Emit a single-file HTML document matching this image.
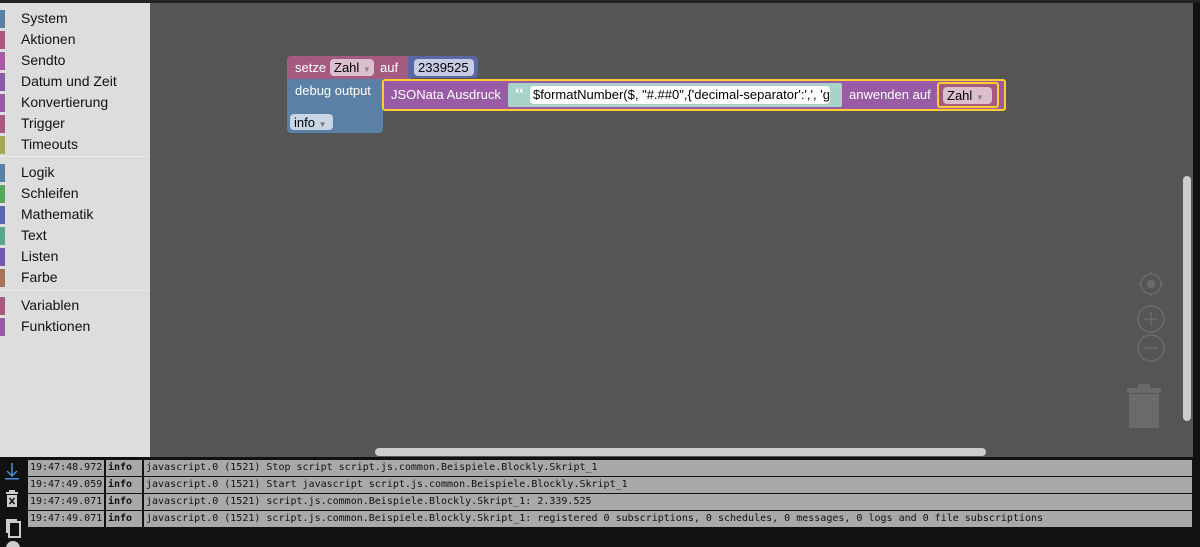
<!DOCTYPE html>
<html><head><meta charset="utf-8"><style>
*{margin:0;padding:0;box-sizing:border-box}
body{width:1200px;height:547px;overflow:hidden;background:#111;font-family:"Liberation Sans",sans-serif;position:relative}
.abs{position:absolute}
#side{left:0;top:3px;width:150px;height:454px;background:#ddd}
.it{position:absolute;left:0;height:21px;font-size:14px;color:#111;line-height:21px;padding-left:21px;width:150px}
.it i{position:absolute;left:0;top:2px;width:5px;height:18px}
.sep{position:absolute;left:0;width:150px;height:1px;background:#eaeaea}
#ws{left:150px;top:3px;width:1043px;height:454px;background:#555}
.blk{position:absolute;color:#fff;font-size:13px;line-height:18px}
.fld{position:absolute;border-radius:4px;color:#000;font-size:13px;line-height:17px;padding-left:4px}
.log{position:absolute;left:28px;height:16px;font-family:"DejaVu Sans Mono","Liberation Mono",monospace;font-size:10px;line-height:16px;color:#111}
.log span{position:absolute;top:0;height:16px;background:#a9a9a9;padding-left:2px;white-space:nowrap;overflow:hidden}
</style></head><body>
<div class="abs" style="left:0;top:0;width:1200px;height:3px;background:#222"></div>
<div id="side" class="abs">
<div class="it" style="top:5px"><i style="background:#5b80a5"></i>System</div>
<div class="it" style="top:26px"><i style="background:#a55b80"></i>Aktionen</div>
<div class="it" style="top:47px"><i style="background:#a55ba5"></i>Sendto</div>
<div class="it" style="top:68px"><i style="background:#8a5ba5"></i>Datum und Zeit</div>
<div class="it" style="top:89px"><i style="background:#9a5ba5"></i>Konvertierung</div>
<div class="it" style="top:110px"><i style="background:#a55b80"></i>Trigger</div>
<div class="it" style="top:131px"><i style="background:#a5a55b"></i>Timeouts</div>
<div class="sep" style="top:153px"></div>
<div class="it" style="top:159px"><i style="background:#5b80a5"></i>Logik</div>
<div class="it" style="top:180px"><i style="background:#5ba55b"></i>Schleifen</div>
<div class="it" style="top:201px"><i style="background:#5b67a5"></i>Mathematik</div>
<div class="it" style="top:222px"><i style="background:#5ba58c"></i>Text</div>
<div class="it" style="top:243px"><i style="background:#745ba5"></i>Listen</div>
<div class="it" style="top:264px"><i style="background:#a5745b"></i>Farbe</div>
<div class="sep" style="top:287px"></div>
<div class="it" style="top:292px"><i style="background:#a55b80"></i>Variablen</div>
<div class="it" style="top:313px"><i style="background:#995ba5"></i>Funktionen</div>
</div>
<div id="ws" class="abs">
<div class="abs" style="left:225px;top:445px;width:611px;height:8px;border-radius:4px;background:#ccc"></div>
<div class="abs" style="left:1033px;top:173px;width:8px;height:245px;border-radius:4px;background:#ccc"></div>
<svg class="abs" style="left:985px;top:265px" width="32" height="100" viewBox="0 0 32 100" fill="none" stroke="#6a6a6a" stroke-width="1.5">
<circle cx="16" cy="16" r="10"/><circle cx="16" cy="16" r="3.5" fill="#6a6a6a"/>
<path d="M16 3v4M16 25v4M3 16h4M25 16h4"/>
<circle cx="16" cy="51" r="13"/><path d="M9 51h14M16 44v14"/>
<circle cx="16" cy="80" r="13"/><path d="M9 80h14"/>
</svg>
<svg class="abs" style="left:976px;top:380px" width="36" height="48"><path d="M1 5h34v5H1z M12 1h12v4H12z" fill="#6a6a6a"/><path d="M3 11h30v32a2 2 0 0 1-2 2H5a2 2 0 0 1-2-2z" fill="#6a6a6a"/></svg>
</div>

<div class="blk" style="left:287px;top:56px;width:124px;height:23px;background:#a55b80;border-radius:4px 4px 0 0"></div>
<div class="blk" style="left:295px;top:59px">setze</div>
<div class="fld" style="left:330px;top:59px;width:44px;height:17px;background:#dcbfcd">Zahl <span style="font-size:8px;color:#888">▼</span></div>
<div class="blk" style="left:380px;top:59px">auf</div>
<div class="blk" style="left:408px;top:56px;width:70px;height:22px;background:#5b67a5;border-radius:0 4px 4px 0"></div>
<div class="fld" style="left:414px;top:59px;width:60px;height:17px;background:#c6cce6">2339525</div>
<div class="blk" style="left:287px;top:79px;width:96px;height:54px;background:#5b80a5;border-radius:0 0 4px 4px"></div>
<div class="blk" style="left:295px;top:82px">debug output</div>
<div class="fld" style="left:290px;top:114px;width:43px;height:16px;background:#c8d6e5">info <span style="font-size:8px;color:#777">▼</span></div>
<div class="blk" style="left:382px;top:79px;width:624px;height:32px;background:#9a5ba5;border:2px solid #fc3;border-radius:3px"></div>
<div class="blk" style="left:391px;top:86px">JSONata Ausdruck</div>
<div class="blk" style="left:508px;top:83px;width:334px;height:24px;background:#a9d2c8;border-radius:2px"></div>
<div class="blk" style="left:515px;top:86px;color:#fff;font-size:20px;font-family:'Liberation Serif',serif">“</div>
<div class="fld" style="left:530px;top:86px;width:300px;height:18px;background:#fff;overflow:hidden;white-space:nowrap;padding-left:3px">$formatNumber($, "#.##0",{'decimal-separator':',', 'grouping-separator':'.'})</div>
<div class="blk" style="left:821px;top:86px;color:#fff;font-size:20px;font-family:'Liberation Serif',serif">”</div>
<div class="blk" style="left:849px;top:86px">anwenden auf</div>
<div class="blk" style="left:937px;top:82px;width:62px;height:26px;background:#a55b80;border:2px solid #fc3;border-radius:3px"></div>
<div class="fld" style="left:943px;top:87px;width:49px;height:17px;background:#dcbfcd">Zahl <span style="font-size:8px;color:#888">▼</span></div>

<svg class="abs" style="left:2px;top:460px" width="22" height="87" fill="#ccc">
<path d="M10 3v13M5 11l5 5 5-5" stroke="#4a90d9" stroke-width="1.5" fill="none"/><rect x="3" y="18" width="14" height="1.5" fill="#4a90d9"/>
<rect x="4" y="32" width="12" height="2"/><rect x="7" y="30" width="6" height="2"/><rect x="5" y="35" width="10" height="12"/>
<path d="M7.5 38l5 6M12.5 38l-5 6" stroke="#111" stroke-width="1.5"/>
<path d="M4 59v14h2V61h9v-2z"/><rect x="7" y="62" width="11" height="15" fill="none" stroke="#ccc" stroke-width="2"/>
<circle cx="11" cy="88" r="7" fill="#ccc"/>
</svg>
<div class="log" style="top:460px"><span style="left:0;width:76px">19:47:48.972</span><span style="left:78px;width:36px;font-weight:bold">info</span><span style="left:116px;width:1048px">javascript.0 (1521) Stop script script.js.common.Beispiele.Blockly.Skript_1</span></div>
<div class="log" style="top:477px"><span style="left:0;width:76px">19:47:49.059</span><span style="left:78px;width:36px;font-weight:bold">info</span><span style="left:116px;width:1048px">javascript.0 (1521) Start javascript script.js.common.Beispiele.Blockly.Skript_1</span></div>
<div class="log" style="top:494px"><span style="left:0;width:76px">19:47:49.071</span><span style="left:78px;width:36px;font-weight:bold">info</span><span style="left:116px;width:1048px">javascript.0 (1521) script.js.common.Beispiele.Blockly.Skript_1: 2.339.525</span></div>
<div class="log" style="top:511px"><span style="left:0;width:76px">19:47:49.071</span><span style="left:78px;width:36px;font-weight:bold">info</span><span style="left:116px;width:1048px">javascript.0 (1521) script.js.common.Beispiele.Blockly.Skript_1: registered 0 subscriptions, 0 schedules, 0 messages, 0 logs and 0 file subscriptions</span></div>
</body></html>
